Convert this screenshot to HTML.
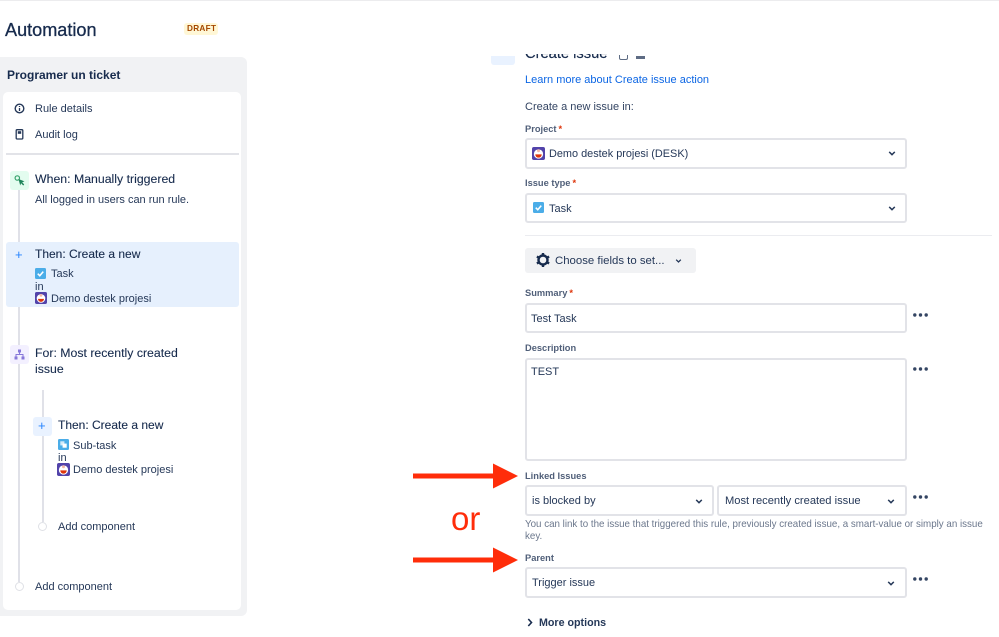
<!DOCTYPE html>
<html lang="en"><head><meta charset="utf-8"><title>Automation</title>
<style>
html,body{margin:0;padding:0;background:#fff}
#p{position:relative;width:999px;height:637px;overflow:hidden;background:#fff;font-family:"Liberation Sans",sans-serif;color:#172b4d}
#p div,#p svg,#p span.t{position:absolute}
.t{white-space:nowrap;line-height:14px}
.s{font-size:11px;color:#253858}
.h{font-size:12.2px;color:#172b4d;-webkit-text-stroke:.1px #172b4d}
.l{font-size:9.3px;font-weight:bold;color:#505f79}
.l i{color:#de350b;font-style:normal;margin-left:2px}
.b{box-sizing:border-box;border:2px solid #e2e3e8;border-radius:3px;background:#fff}
</style></head><body><div id="p">
<svg width="0" height="0" style="position:absolute"><defs>
<symbol id="proj" viewBox="0 0 14 14"><rect width="14" height="14" rx="2" fill="#5243aa"/><circle cx="7" cy="7.500" r="5" fill="#fff"/><path d="M3.500 8h7a3.500 3.500 0 0 1-7 0z" fill="#de350b"/><circle cx="7" cy="4" r="1.600" fill="#f4b8a8"/></symbol>
<symbol id="task" viewBox="0 0 12 12"><rect width="12" height="12" rx="1.500" fill="#4bade8"/><path d="M3 6.200l2.200 2.200L9 4" fill="none" stroke="#fff" stroke-width="1.700"/></symbol>
<symbol id="sub" viewBox="0 0 12 12"><rect width="12" height="12" rx="1.500" fill="#4bade8"/><rect x="2.500" y="2.500" width="4.500" height="4.500" fill="#fff" opacity=".75"/><rect x="5" y="5" width="4.500" height="4.500" fill="#fff"/></symbol>
<symbol id="chev" viewBox="0 0 10 6"><path d="M1.500 1l3.500 3.500L8.500 1" fill="none" stroke="#253858" stroke-width="1.900"/></symbol>
<symbol id="dots" viewBox="0 0 15 4"><circle cx="1.800" cy="2" r="1.700" fill="#344563"/><circle cx="7.500" cy="2" r="1.700" fill="#344563"/><circle cx="13.200" cy="2" r="1.700" fill="#344563"/></symbol>
</defs></svg>

<div style="left:0;top:0;width:999px;height:1px;background:#ececee"></div>
<span class="t" style="left:5px;top:20px;font-size:18.100px;line-height:20px;color:#172b4d;-webkit-text-stroke:.3px #172b4d">Automation</span>
<div style="left:184px;top:23px;width:34px;height:12px;background:#fff7d6;border-radius:3px"></div>
<span class="t" style="left:187px;top:22px;font-size:8.200px;font-weight:bold;color:#a54800;letter-spacing:.3px">DRAFT</span>

<div style="left:0;top:57px;width:247px;height:559px;background:#f1f2f4;border-radius:0 6px 6px 0"></div>
<span class="t" style="left:7px;top:68px;font-size:12px;font-weight:bold;color:#172b4d">Programer un ticket</span>
<div style="left:3px;top:92px;width:238px;height:518px;background:#fff;border-radius:5px"></div>

<svg style="left:13px;top:102px" width="13" height="13" viewBox="0 0 13 13"><circle cx="6.500" cy="6.500" r="4.300" fill="none" stroke="#253858" stroke-width="1.400"/><path d="M6.500 6v3M6.500 4v1" stroke="#253858" stroke-width="1.300"/></svg>
<span class="t s" style="left:35px;top:102px">Rule details</span>
<svg style="left:13px;top:128px" width="13" height="13" viewBox="0 0 13 13"><rect x="3.200" y="1.700" width="6.600" height="9.300" rx="1" fill="none" stroke="#253858" stroke-width="1.300"/><rect x="4.800" y="3.200" width="3.400" height="2.600" fill="#253858"/></svg>
<span class="t s" style="left:35px;top:128px">Audit log</span>
<div style="left:6px;top:153px;width:233px;height:2px;background:#e2e3e8"></div>

<div style="left:18px;top:189px;width:2px;height:393px;background:#e0e1e8"></div>
<div style="left:15px;top:582px;width:9px;height:9px;box-sizing:border-box;border:1.500px solid #dfe1e6;border-radius:50%;background:#fff"></div>

<div style="left:10px;top:171px;width:19px;height:19px;background:#e3fcef;border-radius:3px"></div>
<svg style="left:13px;top:174px" width="13" height="13" viewBox="0 0 13 13"><circle cx="4.300" cy="4" r="2.200" fill="none" stroke="#36a26b" stroke-width="1.200"/><path d="M5.500 5l6 2.400-2.300.9 2 2.200-1 1-2.100-2.200-.9 2.200z" fill="#1f845a"/></svg>
<span class="t h" style="left:35px;top:172px;font-size:12.300px">When: Manually triggered</span>
<span class="t s" style="left:35px;top:193px">All logged in users can run rule.</span>

<div style="left:6px;top:242px;width:233px;height:65px;background:#e6f0fd;border-radius:3px"></div>
<span class="t" style="left:15px;top:248px;font-size:13px;color:#2684ff">+</span>
<span class="t h" style="left:35px;top:247px;font-size:12px">Then: Create a new</span>
<svg style="left:35px;top:268px" width="11" height="11"><use href="#task"/></svg>
<span class="t s" style="left:51px;top:267px">Task</span>
<span class="t s" style="left:35px;top:280px">in</span>
<svg style="left:35px;top:292px" width="12" height="12"><use href="#proj"/></svg>
<span class="t s" style="left:51px;top:292px">Demo destek projesi</span>

<div style="left:10px;top:345px;width:19px;height:19px;background:#f3f0ff;border-radius:3px"></div>
<svg style="left:14px;top:349px" width="11" height="11" viewBox="0 0 11 11"><g fill="#8777d9"><rect x="4" y="0.500" width="3" height="3"/><rect x=".5" y="7.500" width="3" height="3"/><rect x="7.500" y="7.500" width="3" height="3"/></g><path d="M5.500 3.500v2M2 7.500V5.500h7v2" fill="none" stroke="#8777d9"/></svg>
<span class="t h" style="left:35px;top:346px;font-size:12.300px">For: Most recently created</span>
<span class="t h" style="left:35px;top:362px;font-size:12.300px">issue</span>

<div style="left:42px;top:390px;width:2px;height:132px;background:#e0e1e8"></div>
<div style="left:33px;top:417px;width:19px;height:19px;background:#e9f2ff;border-radius:3px"></div>
<span class="t" style="left:38px;top:419px;font-size:13px;color:#2684ff">+</span>
<span class="t h" style="left:58px;top:418px;font-size:12px">Then: Create a new</span>
<svg style="left:58px;top:439px" width="11" height="11"><use href="#sub"/></svg>
<span class="t s" style="left:73px;top:439px">Sub-task</span>
<span class="t s" style="left:58px;top:451px">in</span>
<svg style="left:57px;top:463px" width="13" height="13"><use href="#proj"/></svg>
<span class="t s" style="left:73px;top:463px">Demo destek projesi</span>
<div style="left:38px;top:522px;width:9px;height:9px;box-sizing:border-box;border:1.500px solid #dfe1e6;border-radius:50%;background:#fff"></div>
<span class="t s" style="left:58px;top:520px">Add component</span>
<span class="t s" style="left:35px;top:580px">Add component</span>

<div style="left:491px;top:56px;width:24px;height:9px;background:#e9f2ff;border-radius:0 0 3px 3px"></div>
<div style="left:525px;top:54px;width:90px;height:6px;overflow:hidden"><span class="t" style="left:0;top:-10px;font-size:14.700px;line-height:20px;color:#172b4d;-webkit-text-stroke:.2px #172b4d">Create issue</span></div>
<div style="left:619px;top:55px;width:9px;height:5px;box-sizing:border-box;border:1.500px solid #5e6c84;border-top:0;border-radius:0 0 2px 2px"></div>
<div style="left:636px;top:56px;width:9px;height:3px;background:#5e6c84"></div>
<span class="t" style="left:525px;top:73px;font-size:11px;color:#0c66e4">Learn more about Create issue action</span>
<span class="t s" style="left:525px;top:100px;color:#344563">Create a new issue in:</span>

<span class="t l" style="left:525px;top:122px">Project<i>*</i></span>
<div class="b" style="left:525px;top:138px;width:382px;height:31px"></div>
<svg style="left:532px;top:147px" width="13" height="13"><use href="#proj"/></svg>
<span class="t s" style="left:549px;top:147px;font-size:10.900px">Demo destek projesi (DESK)</span>
<svg style="left:888px;top:151px" width="8" height="5"><use href="#chev"/></svg>

<span class="t l" style="left:525px;top:176px">Issue type<i>*</i></span>
<div class="b" style="left:525px;top:193px;width:382px;height:30px"></div>
<svg style="left:533px;top:202px" width="11" height="11"><use href="#task"/></svg>
<span class="t s" style="left:549px;top:202px">Task</span>
<svg style="left:888px;top:206px" width="8" height="5"><use href="#chev"/></svg>
<div style="left:525px;top:235px;width:467px;height:1px;background:#ebecf0"></div>

<div style="left:525px;top:248px;width:171px;height:25px;background:#f1f2f4;border-radius:3px"></div>
<svg style="left:535px;top:252px" width="16" height="16" viewBox="0 0 16 16"><circle cx="8" cy="8" r="4.500" fill="none" stroke="#172b4d" stroke-width="2.400"/><g stroke="#172b4d" stroke-width="2.400"><path d="M8 1v2.500M8 12.500V15M1.900 4.500l2.200 1.300M11.900 10.200l2.200 1.300M1.900 11.500l2.200-1.300M11.900 5.800l2.200-1.300"/></g></svg>
<span class="t s" style="left:555px;top:254px;font-size:11.400px">Choose fields to set...</span>
<svg style="left:675px;top:259px" width="7" height="4"><use href="#chev"/></svg>

<span class="t l" style="left:525px;top:286px">Summary<i>*</i></span>
<div class="b" style="left:525px;top:303px;width:382px;height:30px"></div>
<span class="t s" style="left:531px;top:312px">Test Task</span>
<svg style="left:913px;top:313px" width="15" height="4"><use href="#dots"/></svg>

<span class="t l" style="left:525px;top:341px">Description</span>
<div class="b" style="left:525px;top:358px;width:382px;height:103px"></div>
<span class="t s" style="left:531px;top:365px">TEST</span>
<svg style="left:913px;top:367px" width="15" height="4"><use href="#dots"/></svg>

<span class="t l" style="left:525px;top:469px">Linked Issues</span>
<div class="b" style="left:525px;top:485px;width:189px;height:31px"></div>
<span class="t s" style="left:532px;top:494px">is blocked by</span>
<svg style="left:695px;top:499px" width="8" height="5"><use href="#chev"/></svg>
<div class="b" style="left:717px;top:485px;width:190px;height:31px"></div>
<span class="t s" style="left:725px;top:494px;font-size:11.150px">Most recently created issue</span>
<svg style="left:887px;top:499px" width="8" height="5"><use href="#chev"/></svg>
<svg style="left:913px;top:495px" width="15" height="4"><use href="#dots"/></svg>
<span class="t" style="left:525px;top:518px;font-size:9.780px;color:#6b778c">You can link to the issue that triggered this rule, previously created issue, a smart-value or simply an issue</span>
<span class="t" style="left:525px;top:530px;font-size:9.780px;color:#6b778c">key.</span>

<span class="t l" style="left:525px;top:551px">Parent</span>
<div class="b" style="left:525px;top:567px;width:382px;height:31px"></div>
<span class="t s" style="left:532px;top:576px">Trigger issue</span>
<svg style="left:887px;top:581px" width="8" height="5"><use href="#chev"/></svg>
<svg style="left:913px;top:577px" width="15" height="4"><use href="#dots"/></svg>

<svg style="left:527px;top:618px" width="6" height="9" viewBox="0 0 6 9"><path d="M1.300 1l3.200 3.500L1.300 8" fill="none" stroke="#172b4d" stroke-width="1.600"/></svg>
<span class="t" style="left:539px;top:616px;font-size:10.700px;font-weight:bold;color:#253858">More options</span>

<svg style="left:410px;top:460px" width="110" height="116" viewBox="0 0 110 116"><g fill="#ff2d0a"><rect x="3" y="13.500" width="81" height="5"/><path d="M83 3.500L108 16L83 28.500z"/><rect x="3" y="97.500" width="81" height="5"/><path d="M83 87.500L108 100L83 112.500z"/></g></svg>
<span class="t" style="left:451px;top:504px;font-size:33px;line-height:30px;color:#ff2d0a">or</span>
</div></body></html>
